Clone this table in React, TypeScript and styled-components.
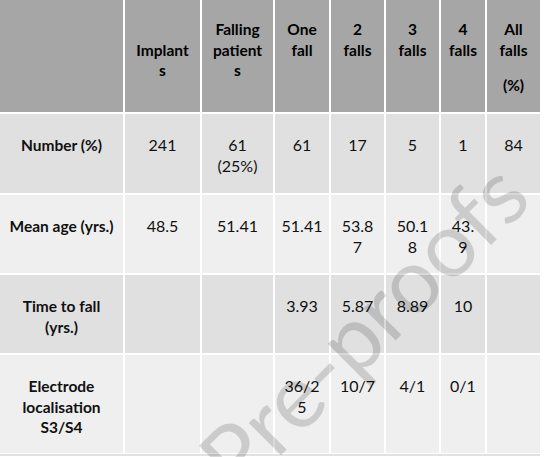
import React from "react";
import styled, { createGlobalStyle } from "styled-components";

const GlobalStyle = createGlobalStyle`
  html, body {
    margin: 0;
    padding: 0;
    background: #ffffff;
  }
  body {
    font-family: Lato, "Open Sans", sans-serif;
    color: #000000;
  }
`;

const Page = styled.div`
  position: relative;
  width: 544px;
  height: 457px;
  overflow: hidden;
  background: #ffffff;
`;

const Grid = styled.div`
  display: grid;
  grid-template-columns: 123px 75px 71px 54px 53px 53px 44px 53px;
  grid-template-rows: 112px 79px 78px 78px 98px;
  gap: 2px;
  width: 540px;
  border-bottom: 2px solid #e2e2e2;
  padding-bottom: 1px;
`;

const HeadCell = styled.div<{ $drop?: number }>`
  background: #a6a6a6;
  font-size: 15.5px;
  font-weight: 700;
  line-height: 20.5px;
  text-align: center;
  padding-top: ${(p) => 19 + (p.$drop || 0) * 20.5}px;
  white-space: nowrap;
`;

const Note = styled.div`
  margin-top: 15px;
`;

const Cell = styled.div<{ $shade: "dark" | "light"; $bold?: boolean }>`
  background: ${(p) => (p.$shade === "dark" ? "#e0e0e0" : "#efefef")};
  font-size: ${(p) => (p.$bold ? 15.5 : 16)}px;
  font-weight: ${(p) => (p.$bold ? 700 : 400)};
  line-height: 20.5px;
  text-align: center;
  padding-top: 21px;
  white-space: nowrap;
  color: #111111;
`;

const Watermark = styled.span`
  position: absolute;
  right: 34px;
  top: 132px;
  font-size: 90px;
  line-height: 90px;
  white-space: nowrap;
  color: rgba(0, 0, 0, 0.15);
  transform-origin: 100% 50%;
  transform: rotate(-45deg);
  pointer-events: none;
`;

type Row = { shade: "dark" | "light"; label: React.ReactNode; values: React.ReactNode[] };

const rows: Row[] = [
  {
    shade: "dark",
    label: "Number (%)",
    values: [
      "241",
      <>
        61
        <br />
        (25%)
      </>,
      "61",
      "17",
      "5",
      "1",
      "84",
    ],
  },
  {
    shade: "light",
    label: "Mean age (yrs.)",
    values: [
      "48.5",
      "51.41",
      "51.41",
      <>
        53.8
        <br />7
      </>,
      <>
        50.1
        <br />8
      </>,
      <>
        43.
        <br />9
      </>,
      "",
    ],
  },
  {
    shade: "dark",
    label: (
      <>
        Time to fall
        <br />
        (yrs.)
      </>
    ),
    values: ["", "", "3.93", "5.87", "8.89", "10", ""],
  },
  {
    shade: "light",
    label: (
      <>
        Electrode
        <br />
        localisation
        <br />
        S3/S4
      </>
    ),
    values: [
      "",
      "",
      <>
        36/2
        <br />5
      </>,
      "10/7",
      "4/1",
      "0/1",
      "",
    ],
  },
];

export default function App() {
  return (
    <Page>
      <GlobalStyle />
      <Grid>
        <HeadCell />
        <HeadCell $drop={1}>
          Implant
          <br />s
        </HeadCell>
        <HeadCell>
          Falling
          <br />
          patient
          <br />s
        </HeadCell>
        <HeadCell>
          One
          <br />
          fall
        </HeadCell>
        <HeadCell>
          2<br />
          falls
        </HeadCell>
        <HeadCell>
          3<br />
          falls
        </HeadCell>
        <HeadCell>
          4<br />
          falls
        </HeadCell>
        <HeadCell>
          All
          <br />
          falls
          <Note>(%)</Note>
        </HeadCell>
        {rows.map((row, i) => (
          <React.Fragment key={i}>
            <Cell $shade={row.shade} $bold>
              {row.label}
            </Cell>
            {row.values.map((v, j) => (
              <Cell key={j} $shade={row.shade}>
                {v}
              </Cell>
            ))}
          </React.Fragment>
        ))}
      </Grid>
      <Watermark>Journal Pre-proofs</Watermark>
    </Page>
  );
}
